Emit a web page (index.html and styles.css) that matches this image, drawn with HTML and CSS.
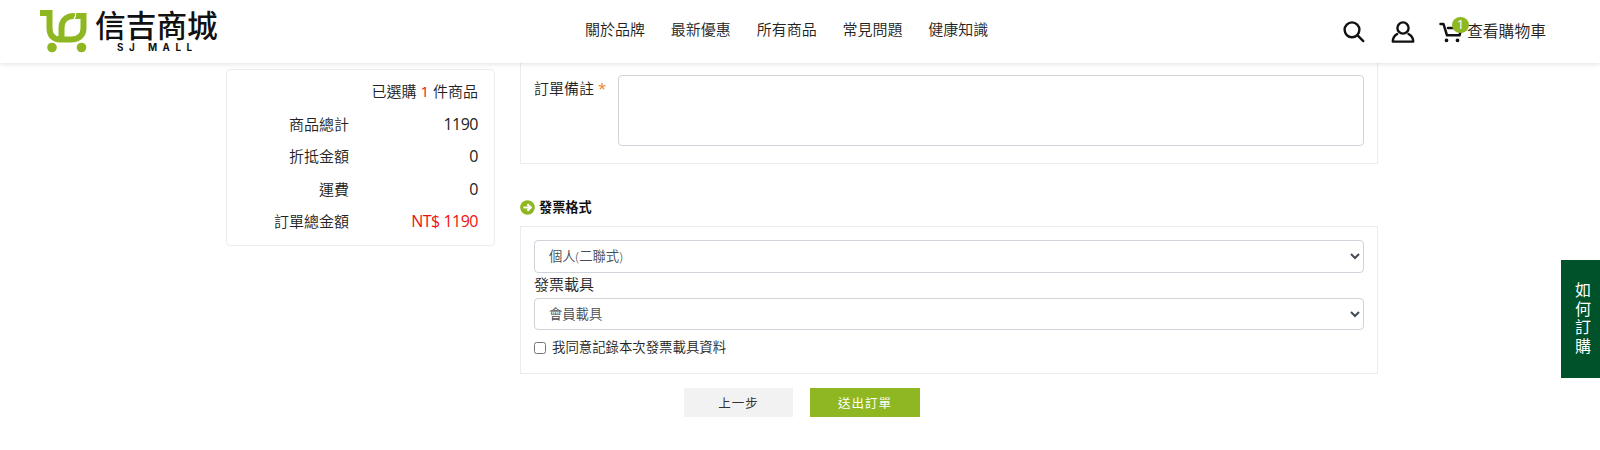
FILE: index.html
```html
<!DOCTYPE html>
<html lang="zh-Hant">
<head>
    <meta charset="UTF-8">
    <meta name="viewport" content="width=device-width, initial-scale=1.0">
    <title>信吉商城</title>
    <link rel="stylesheet" href="styles.css">
</head>
<body>

    <header class="header">
        <a class="logo">
            <svg class="logo-mark" width="48" height="44" viewBox="0 0 48 44">
                <path d="M0 3H9.500V18C9.500 26 14 29.500 20 29.500H31C39 29.500 43.500 25 43.500 18V6H34C26 6 21.500 11 21.500 18V30" fill="none" stroke="#8fb721" stroke-width="6"/>
                <path d="M35.500 2V6L33.500 10" fill="none" stroke="#fff" stroke-width="1.200"/>
                <circle cx="12" cy="37.500" r="4.800" fill="#8fb721"/>
                <circle cx="41.500" cy="37.500" r="4.800" fill="#8fb721"/>
            </svg>
            <span class="logo-text">
                <span class="logo-name">信吉商城</span>
                <span class="logo-sub">SJ MALL</span>
            </span>
        </a>

        <nav class="nav">
            <a>關於品牌</a>
            <a>最新優惠</a>
            <a>所有商品</a>
            <a>常見問題</a>
            <a>健康知識</a>
        </nav>

        <div class="tools">
            <svg width="22" height="22" viewBox="0 0 22 22" fill="none" stroke="#111" stroke-width="2.400" stroke-linecap="round">
                <circle cx="9" cy="8.800" r="7.400"/>
                <path d="M14.600 14.400L20.300 20.100"/>
            </svg>
            <svg class="icon-user" width="24" height="22" viewBox="0 0 24 22" fill="none" stroke="#111" stroke-width="2.400" stroke-linejoin="round" stroke-linecap="round">
                <circle cx="12" cy="7" r="5.600"/>
                <path d="M6.200 13C3.400 14.600 1.800 17 1.800 20.600H22.200C22.200 17 20.600 14.600 17.500 13"/>
            </svg>
            <a class="cart">
                <svg width="26" height="22" viewBox="0 0 26 22" fill="none" stroke="#111" stroke-width="2.500" stroke-linejoin="round" stroke-linecap="round">
                    <path d="M1.500 3H4.500L8 14.300H20.500L22.500 7H9"/>
                    <circle cx="7.500" cy="19.300" r="1.200" fill="#111" stroke-width="1.400"/>
                    <circle cx="18.500" cy="19.300" r="1.200" fill="#111" stroke-width="1.400"/>
                </svg>
                <span class="badge">1</span>
                <span>查看購物車</span>
            </a>
        </div>
    </header>

    <main class="page">
        <aside class="summary">
            <div class="summary-count">已選購 <em>1</em> 件商品</div>
            <div class="summary-row"><span>商品總計</span><span class="amount">1190</span></div>
            <div class="summary-row"><span>折抵金額</span><span class="amount">0</span></div>
            <div class="summary-row"><span>運費</span><span class="amount">0</span></div>
            <div class="summary-row"><span>訂單總金額</span><em class="amount">NT$ 1190</em></div>
        </aside>

        <div class="content">
            <section class="box note">
                <label for="note">訂單備註 <i>*</i></label>
                <textarea id="note"></textarea>
            </section>

            <h2 class="title">
                <svg width="15" height="15" viewBox="0 0 15 15">
                    <circle cx="7.500" cy="7.500" r="7.300" fill="#8fb721"/>
                    <path d="M3.400 7.500H10.500M7.400 4.200L10.700 7.500L7.400 10.800" fill="none" stroke="#fff" stroke-width="2.200"/>
                </svg>
                發票格式
            </h2>

            <section class="box invoice">
                <select id="invoice-type">
                    <option>個人(二聯式)</option>
                </select>
                <label for="carrier">發票載具</label>
                <select id="carrier">
                    <option>會員載具</option>
                </select>
                <label class="agree"><input type="checkbox"> 我同意記錄本次發票載具資料</label>
            </section>

            <div class="actions">
                <button class="btn">上一步</button>
                <button class="btn btn-submit">送出訂單</button>
            </div>
        </div>
    </main>

    <a class="how-to">如何訂購</a>

</body>
</html>
```
FILE: styles.css
```css
* {
    box-sizing: border-box;
}

body {
    margin: 0;
    height: 450px;
    overflow: hidden;
    background: #fff;
    color: #222;
    font-family: "Open Sans", "Noto Sans CJK TC", sans-serif;
    font-size: 15px;
    font-weight: 350;
    line-height: 24px;
}

em, i {
    font-style: normal;
}

/* Header */
.header {
    position: relative;
    z-index: 2;
    display: grid;
    grid-template-columns: 545px 1fr auto;
    height: 63px;
    padding: 0 54px 0 40px;
    background: #fff;
    box-shadow: 0 0 6px rgba(0, 0, 0, 0.16);
}

.logo {
    display: flex;
    gap: 7px;
    padding-top: 10px;
    color: #111;
}

.logo-text {
    display: flex;
    flex-direction: column;
}

.logo-name {
    font-size: 30.7px;
    font-weight: 500;
    line-height: 31px;
}

.logo-sub {
    padding-left: 22px;
    font-family: Inter, sans-serif;
    font-size: 9.8px;
    font-weight: bold;
    line-height: 14px;
    letter-spacing: 5.5px;
}

.nav {
    display: flex;
    gap: 25.8px;
    padding-top: 17px;
}

.tools {
    display: flex;
    align-items: flex-start;
    padding-top: 21px;
}

.icon-user {
    margin-left: 26px;
}

.cart {
    position: relative;
    display: flex;
    margin-left: 24px;
    font-size: 15.8px;
    line-height: 20px;
}

.cart svg {
    margin-right: 2px;
}

.badge {
    position: absolute;
    left: 13px;
    top: -4px;
    width: 17px;
    height: 16px;
    border-radius: 50%;
    background: #8fb721;
    color: #fff;
    font-size: 13px;
    font-weight: 400;
    line-height: 14px;
    text-align: center;
}

/* Page layout */
.page {
    display: grid;
    grid-template-columns: 269px 858px;
    gap: 25px;
    align-items: start;
    padding-left: 226px;
}

.summary {
    margin-top: 6px;
    height: 177px;
    padding: 5px 16px 0 15px;
    border: 1px solid #ececec;
    border-radius: 4px;
    line-height: 32.5px;
    text-align: right;
}

.summary-row {
    display: grid;
    grid-template-columns: 107px 1fr;
}

.summary .amount {
    font-size: 16px;
    font-weight: 400;
    letter-spacing: -0.5px;
}

.summary em {
    color: #ee1111;
    font-weight: 400;
}

.box {
    border: 1px solid #ececec;
}

.note {
    display: flex;
    height: 101px;
    padding: 12px 13px 0;
    border-top: 0;
}

.note label {
    width: 84px;
    padding-top: 1px;
}

.note i {
    color: #f57c1f;
    font-weight: 400;
}

textarea {
    flex: 1;
    height: 71px;
    border: 1px solid #ced4da;
    border-radius: 4px;
    resize: none;
}

.title {
    display: flex;
    align-items: center;
    gap: 4px;
    height: 20px;
    margin: 33px 0 9px;
    color: #111;
    font-size: 13.2px;
    font-weight: bold;
}

.invoice {
    display: flex;
    flex-direction: column;
    height: 148px;
    padding: 13px;
}

select {
    width: 100%;
    height: 33px;
    padding: 0 10px;
    border: 1px solid #ced4da;
    border-radius: 4px;
    background: #fff;
    color: #444b52;
    font-family: inherit;
    font-size: 13.3px;
    font-weight: 350;
}

.invoice label {
    height: 25px;
    line-height: 23px;
}

.invoice .agree {
    display: flex;
    align-items: center;
    gap: 6px;
    margin-top: 5px;
    font-size: 13.4px;
}

.agree input {
    width: 12px;
    height: 12px;
    margin: 0;
}

/* Buttons */
.actions {
    display: flex;
    gap: 17px;
    padding: 14px 0 0 164px;
}

.btn {
    width: 109px;
    height: 29px;
    padding: 0;
    border: 0;
    background: #f2f2f2;
    color: #333;
    font-family: inherit;
    font-size: 12.5px;
    letter-spacing: 1px;
}

.btn-submit {
    width: 110px;
    background: #8fb721;
    color: #fff;
}

/* Tab fixed on the right edge */
.how-to {
    position: fixed;
    right: 0;
    top: 260px;
    width: 39px;
    height: 118px;
    padding: 21px 9px 0 14px;
    background: #00522a;
    color: #fff;
    font-size: 16px;
    font-weight: 400;
    line-height: 18.7px;
}
```
